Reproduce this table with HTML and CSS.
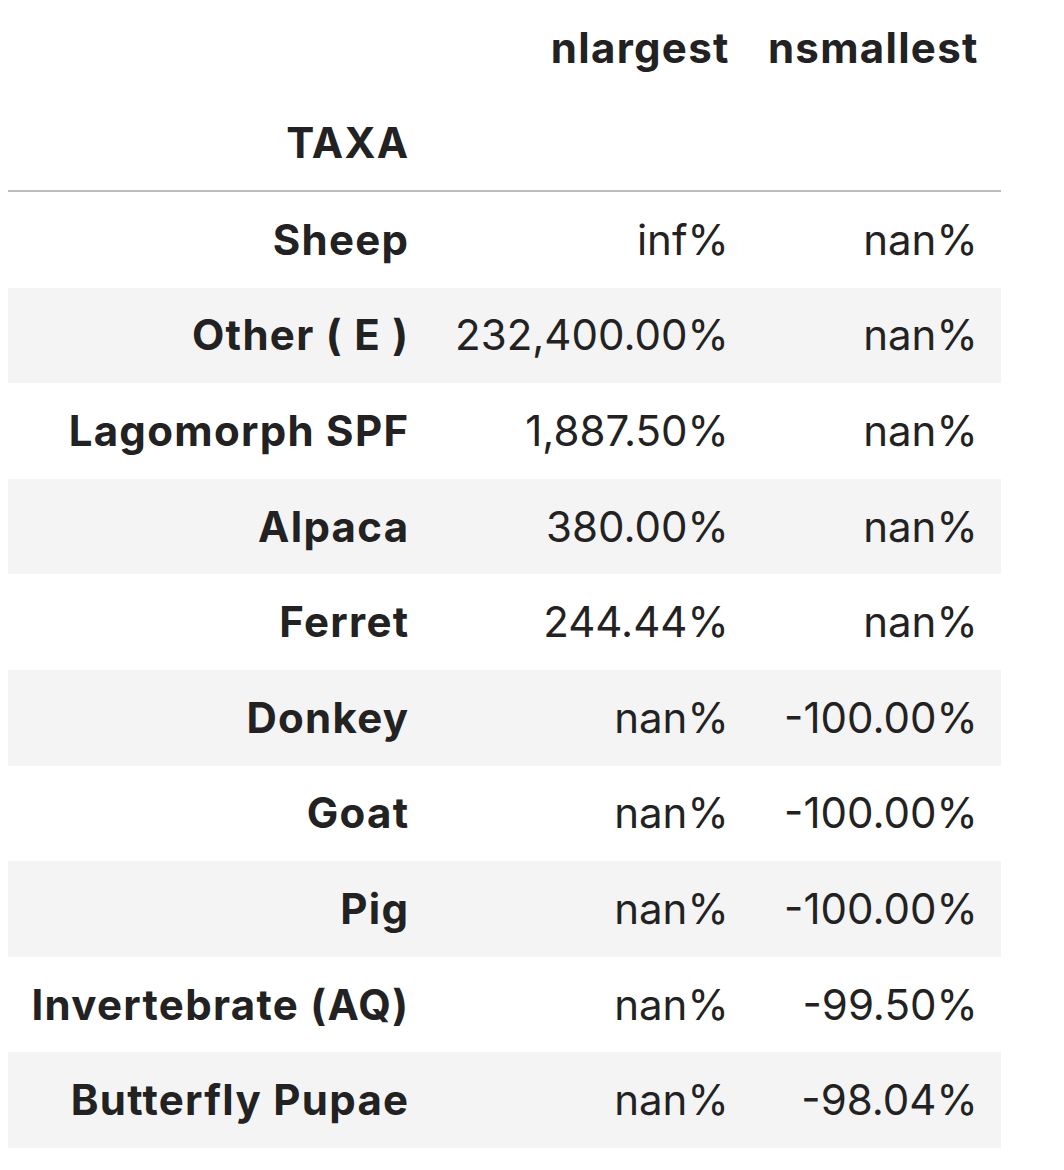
FILE: index.html
```html
<!DOCTYPE html>
<html>
<head>
<meta charset="utf-8">
<link rel="stylesheet" href="styles.css">
</head>
<body>
<table class="df">
  <thead>
    <tr><th class="blank"></th><th class="col">nlargest</th><th class="col">nsmallest</th></tr>
    <tr><th>TAXA</th><th class="blank"></th><th class="blank"></th></tr>
  </thead>
  <tbody>
    <tr><th>Sheep</th><td>inf%</td><td>nan%</td></tr>
    <tr><th>Other ( E )</th><td>232,400.00%</td><td>nan%</td></tr>
    <tr><th>Lagomorph SPF</th><td>1,887.50%</td><td>nan%</td></tr>
    <tr><th>Alpaca</th><td>380.00%</td><td>nan%</td></tr>
    <tr><th>Ferret</th><td>244.44%</td><td>nan%</td></tr>
    <tr><th>Donkey</th><td>nan%</td><td>-100.00%</td></tr>
    <tr><th>Goat</th><td>nan%</td><td>-100.00%</td></tr>
    <tr><th>Pig</th><td>nan%</td><td>-100.00%</td></tr>
    <tr><th>Invertebrate (AQ)</th><td>nan%</td><td>-99.50%</td></tr>
    <tr><th>Butterfly Pupae</th><td>nan%</td><td>-98.04%</td></tr>
  </tbody>
</table>
</body>
</html>
```
FILE: styles.css
```css
html, body {
  margin: 0;
  padding: 0;
  background: #ffffff;
}
body {
  padding: 0 8px;
  font-family: Inter, "Noto Sans", sans-serif;
  color: #222222;
}
.df {
  border-collapse: collapse;
  border-spacing: 0;
  font-size: 42px;
  line-height: 1;
}
.df th,
.df td {
  padding: 26.8px 23.2px 26.8px 23.5px;
  height: 42px;
  text-align: right;
  white-space: nowrap;
  vertical-align: middle;
}
.df th {
  font-weight: 700;
  letter-spacing: 1.3px;
  padding-right: 22.2px;
}
.df td {
  font-weight: 400;
}
.df thead th {
  vertical-align: bottom;
  padding-top: 26.5px;
  padding-bottom: 26.5px;
}
.df thead th.col {
  padding-left: 16px;
}
.df thead {
  border-bottom: 2.5px solid #bdbdbd;
}
.df tbody tr:nth-child(even) {
  background: #f4f4f4;
}
```
